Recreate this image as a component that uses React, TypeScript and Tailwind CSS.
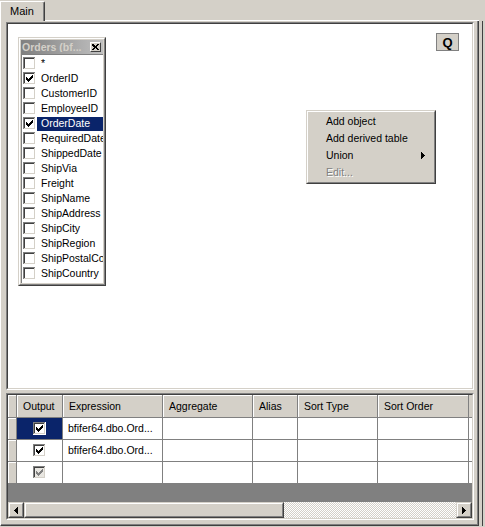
import React from "react";

const fields = [
  "*",
  "OrderID",
  "CustomerID",
  "EmployeeID",
  "OrderDate",
  "RequiredDate",
  "ShippedDate",
  "ShipVia",
  "Freight",
  "ShipName",
  "ShipAddress",
  "ShipCity",
  "ShipRegion",
  "ShipPostalCode",
  "ShipCountry",
];

const checkedFields = ["OrderID", "OrderDate"];

const columns = [
  { label: "Output", w: "w-[46px]" },
  { label: "Expression", w: "w-[100px]" },
  { label: "Aggregate", w: "w-[90px]" },
  { label: "Alias", w: "w-[45px]" },
  { label: "Sort Type", w: "w-[80px]" },
  { label: "Sort Order", w: "w-[91px]" },
];

const rows = [
  { output: "on", expr: "bfifer64.dbo.Ord...", selected: true },
  { output: "on", expr: "bfifer64.dbo.Ord...", selected: false },
  { output: "disabled", expr: "", selected: false },
];

// classic 13x13 sunken checkbox
function CheckBox({ checked, disabled }: { checked?: boolean; disabled?: boolean }) {
  const tops = [5, 6, 7, 6, 5, 4, 3];
  return (
    <svg width="13" height="13" viewBox="0 0 13 13" shapeRendering="crispEdges" className="shrink-0">
      <rect x="0" y="0" width="13" height="13" fill="#fff" />
      <rect x="0" y="0" width="12" height="1" fill="#808080" />
      <rect x="0" y="0" width="1" height="12" fill="#808080" />
      <rect x="1" y="1" width="11" height="11" fill="#d4d0c8" />
      <rect x="1" y="1" width="10" height="1" fill="#404040" />
      <rect x="1" y="1" width="1" height="10" fill="#404040" />
      <rect x="2" y="2" width="9" height="9" fill={disabled ? "#e8e6e1" : "#fff"} />
      {checked &&
        tops.map((t, i) => (
          <rect key={i} x={3 + i} y={t} width="1" height="3" fill={disabled ? "#808080" : "#000"} />
        ))}
    </svg>
  );
}

function Arrow({ dir }: { dir: "left" | "right" }) {
  return (
    <svg width="4" height="7" viewBox="0 0 4 7" shapeRendering="crispEdges">
      {dir === "right" ? (
        <>
          <rect x="0" y="0" width="1" height="7" fill="#000" />
          <rect x="1" y="1" width="1" height="5" fill="#000" />
          <rect x="2" y="2" width="1" height="3" fill="#000" />
          <rect x="3" y="3" width="1" height="1" fill="#000" />
        </>
      ) : (
        <>
          <rect x="3" y="0" width="1" height="7" fill="#000" />
          <rect x="2" y="1" width="1" height="5" fill="#000" />
          <rect x="1" y="2" width="1" height="3" fill="#000" />
          <rect x="0" y="3" width="1" height="1" fill="#000" />
        </>
      )}
    </svg>
  );
}

function ScrollButton({ dir }: { dir: "left" | "right" }) {
  return (
    <div className="w-[16px] h-[16px] shrink-0 border border-t-[#d4d0c8] border-l-[#d4d0c8] border-r-[#404040] border-b-[#404040]">
      <div className="w-full h-full flex items-center justify-center bg-[#d4d0c8] border border-t-white border-l-white border-r-[#808080] border-b-[#808080]">
        <Arrow dir={dir} />
      </div>
    </div>
  );
}

function TableWindow() {
  return (
    <div className="absolute left-[10px] top-[13px] w-[88px] h-[249px] border border-t-[#d4d0c8] border-l-[#d4d0c8] border-r-[#404040] border-b-[#404040]">
      <div className="w-full h-full bg-[#d4d0c8] p-[1px] flex flex-col border border-t-white border-l-white border-r-[#808080] border-b-[#808080]">
        <div className="h-[14px] shrink-0 flex items-center bg-gradient-to-r from-[#808080] to-[#c0c0c0] pl-[1px] pr-[2px]">
          <span className="flex-1 font-bold text-[#d4d0c8] text-[10.5px] whitespace-nowrap overflow-hidden">
            Orders (bf...
          </span>
          <div className="w-[11px] h-[10px] shrink-0 bg-[#d4d0c8] flex items-center justify-center border border-t-white border-l-white border-r-[#404040] border-b-[#404040]">
            <svg width="7" height="6" viewBox="0 0 7 6" shapeRendering="crispEdges">
              <path d="M0 0h2v1h1v1h1v-1h1v-1h2v1h-1v1h-1v1h-1v0h1v1h1v1h1v1h-2v-1h-1v-1h-1v1h-1v1h-2v-1h1v-1h1v-1h-1v-1h-1z" fill="#000" />
            </svg>
          </div>
        </div>
        <div className="flex-1 bg-white border-l border-t border-[#808080] pt-[1px] overflow-hidden">
          {fields.map((f) => {
            const sel = f === "OrderDate";
            return (
              <div key={f} className="h-[15px] flex items-center pl-[1px]">
                <CheckBox checked={checkedFields.includes(f)} />
                <span
                  className={
                    "ml-[1px] h-[14px] flex-1 flex items-center pl-[4px] whitespace-nowrap overflow-hidden " +
                    (sel ? "bg-[#0a246a] text-white" : "")
                  }
                >
                  {f}
                </span>
              </div>
            );
          })}
        </div>
      </div>
    </div>
  );
}

function ContextMenu() {
  const items = [
    { label: "Add object" },
    { label: "Add derived table" },
    { label: "Union", sub: true },
    { label: "Edit...", disabled: true },
  ];
  return (
    <div className="absolute left-[298px] top-[86px] w-[130px] border border-t-[#d4d0c8] border-l-[#d4d0c8] border-r-[#404040] border-b-[#404040]">
      <div className="bg-[#d4d0c8] p-[1px] border border-t-white border-l-white border-r-[#808080] border-b-[#808080]">
        {items.map((it) => (
          <div key={it.label} className="h-[17px] flex items-center pl-[17px] pr-[8px]">
            <span
              className={
                it.disabled ? "text-[#808080] [text-shadow:1px_1px_0_#fff]" : ""
              }
            >
              {it.label}
            </span>
            {it.sub && (
              <span className="ml-auto flex">
                <Arrow dir="right" />
              </span>
            )}
          </div>
        ))}
      </div>
    </div>
  );
}

function Grid() {
  return (
    <div className="h-[127px] shrink-0 border border-t-[#808080] border-l-[#808080] border-r-white border-b-white">
      <div className="w-full h-full flex flex-col bg-[#808080] border border-t-[#404040] border-l-[#404040] border-r-[#d4d0c8] border-b-[#d4d0c8]">
        {/* header */}
        <div className="h-[23px] shrink-0 flex bg-[#d4d0c8]">
          <div className="w-[9px] shrink-0 border-r border-b border-[#808080] shadow-[inset_1px_1px_0_#fff]" />
          {columns.map((c) => (
            <div
              key={c.label}
              className={c.w + " shrink-0 flex items-center pl-[6px] border-r border-b border-[#808080] shadow-[inset_1px_1px_0_#fff] whitespace-nowrap"}
            >
              {c.label}
            </div>
          ))}
          <div className="flex-1 border-b border-[#808080]" />
        </div>
        {/* rows */}
        {rows.map((r, i) => (
          <div key={i} className="h-[22px] shrink-0 flex bg-white">
            <div className="w-[9px] shrink-0 bg-[#d4d0c8] border-r border-b border-[#808080] shadow-[inset_1px_1px_0_#fff]" />
            {columns.map((c, ci) => (
              <div
                key={c.label}
                className={
                  c.w +
                  " shrink-0 flex items-center border-r border-b border-[#808080] whitespace-nowrap overflow-hidden " +
                  (ci === 0 ? "justify-center " : "pl-[5px] ") +
                  (ci === 0 && r.selected ? "bg-[#0a246a]" : "")
                }
              >
                {ci === 0 && (
                  <CheckBox checked disabled={r.output === "disabled"} />
                )}
                {ci === 1 && r.expr}
              </div>
            ))}
            <div className="flex-1 border-b border-[#808080]" />
          </div>
        ))}
        <div className="flex-1" />
        {/* horizontal scrollbar */}
        <div className="h-[16px] shrink-0 flex bg-[#d4d0c8]">
          <ScrollButton dir="left" />
          <div className="w-[260px] h-[16px] shrink-0 border border-t-[#d4d0c8] border-l-[#d4d0c8] border-r-[#404040] border-b-[#404040]">
            <div className="w-full h-full bg-[#d4d0c8] border border-t-white border-l-white border-r-[#808080] border-b-[#808080]" />
          </div>
          <div className="flex-1 bg-[repeating-conic-gradient(#d4d0c8_0_25%,#ffffff_0_50%)] bg-[length:2px_2px]" />
          <ScrollButton dir="right" />
        </div>
      </div>
    </div>
  );
}

export default function App() {
  return (
    <div className="w-[485px] h-[527px] bg-[#d4d0c8] flex flex-col overflow-hidden text-[10.5px] leading-none text-black [font-family:'Liberation_Sans',Arial,sans-serif]">
      {/* tab strip */}
      <div className="h-[21px] shrink-0 flex pr-[6px]">
        <div className="w-[45px] h-[20px] mt-[1px] flex items-center pl-[9px] pb-[1px] border-l border-t border-white border-r border-r-[#404040] shadow-[inset_-1px_0_0_#808080] rounded-tr-[2px] text-[11px]">
          Main
        </div>
        <div className="flex-1 border-b border-white" />
      </div>
      {/* tab panel */}
      <div className="h-[505px] w-[479px] shrink-0 border-l border-white border-r border-b border-r-[#404040] border-b-[#404040] shadow-[3px_0_0_#d4d0c8,4px_0_0_#404040]">
        <div className="w-full h-full flex flex-col pt-[1px] pl-[5px] pr-[3px] pb-[4px] border-r border-b border-[#808080]">
          {/* query canvas */}
          <div className="h-[368px] shrink-0 border border-t-[#808080] border-l-[#808080] border-r-white border-b-white">
            <div className="relative w-full h-full bg-white border border-t-[#404040] border-l-[#404040] border-r-[#d4d0c8] border-b-[#d4d0c8]">
              <TableWindow />
              <div className="absolute left-[428px] top-[9px] w-[23px] h-[18px] flex items-center justify-center bg-[#d4d0c8] border border-[#808080] font-bold text-[13px]">
                Q
              </div>
              <ContextMenu />
            </div>
          </div>
          <div className="h-[3px] shrink-0" />
          <Grid />
        </div>
      </div>
    </div>
  );
}
